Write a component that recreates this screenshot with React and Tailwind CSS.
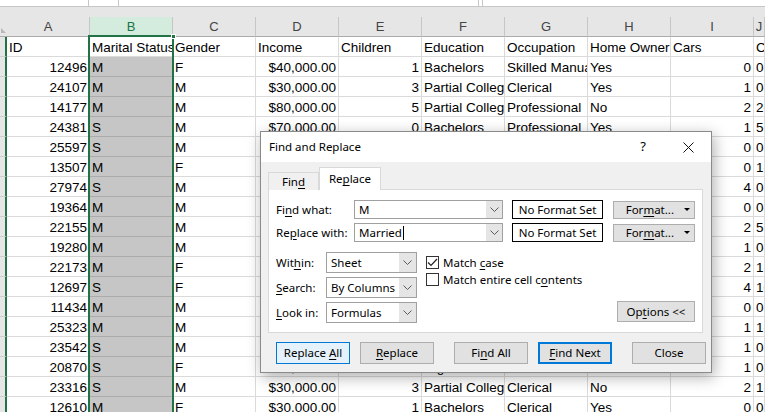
import React from 'react';

const COLS = ['A', 'B', 'C', 'D', 'E', 'F', 'G', 'H', 'I', 'J'];
const RIGHT = [true, false, false, true, true, false, false, false, true, false];

const HEAD = ['ID', 'Marital Status', 'Gender', 'Income', 'Children', 'Education', 'Occupation', 'Home Owner', 'Cars', 'Commute Distance'];

const ROWS = [
  ['12496', 'M', 'F', '$40,000.00', '1', 'Bachelors', 'Skilled Manual', 'Yes', '0', '0-1 Miles'],
  ['24107', 'M', 'M', '$30,000.00', '3', 'Partial College', 'Clerical', 'Yes', '1', '0-1 Miles'],
  ['14177', 'M', 'M', '$80,000.00', '5', 'Partial College', 'Professional', 'No', '2', '2-5 Miles'],
  ['24381', 'S', 'M', '$70,000.00', '0', 'Bachelors', 'Professional', 'Yes', '1', '5-10 Miles'],
  ['25597', 'S', 'M', '$30,000.00', '0', 'Bachelors', 'Clerical', 'No', '0', '0-1 Miles'],
  ['13507', 'M', 'F', '$10,000.00', '2', 'Partial College', 'Manual', 'Yes', '0', '1-2 Miles'],
  ['27974', 'S', 'M', '$160,000.00', '2', 'High School', 'Management', 'Yes', '4', '0-1 Miles'],
  ['19364', 'M', 'M', '$40,000.00', '1', 'Bachelors', 'Skilled Manual', 'Yes', '0', '0-1 Miles'],
  ['22155', 'M', 'M', '$20,000.00', '2', 'Partial High School', 'Clerical', 'Yes', '2', '5-10 Miles'],
  ['19280', 'M', 'M', '$120,000.00', '2', 'Partial College', 'Manual', 'Yes', '1', '0-1 Miles'],
  ['22173', 'M', 'F', '$30,000.00', '3', 'High School', 'Skilled Manual', 'No', '2', '1-2 Miles'],
  ['12697', 'S', 'F', '$90,000.00', '0', 'Bachelors', 'Professional', 'No', '4', '10+ Miles'],
  ['11434', 'M', 'M', '$170,000.00', '5', 'Partial College', 'Professional', 'Yes', '0', '0-1 Miles'],
  ['25323', 'M', 'M', '$40,000.00', '2', 'Partial College', 'Clerical', 'Yes', '1', '1-2 Miles'],
  ['23542', 'S', 'M', '$60,000.00', '1', 'Partial College', 'Skilled Manual', 'No', '1', '0-1 Miles'],
  ['20870', 'S', 'F', '$10,000.00', '2', 'High School', 'Manual', 'Yes', '1', '0-1 Miles'],
  ['23316', 'S', 'M', '$30,000.00', '3', 'Partial College', 'Clerical', 'No', '2', '1-2 Miles'],
  ['12610', 'M', 'F', '$30,000.00', '1', 'Bachelors', 'Clerical', 'Yes', '0', '0-1 Miles'],
];

// underline one access-key letter
const Key = ({ children }) => <span className="underline underline-offset-[2px]">{children}</span>;

const Chevron = () => (
  <svg width="9" height="5" viewBox="0 0 9 5" className="block">
    <path d="M0.5 0.5 L4.5 4.5 L8.5 0.5" fill="none" stroke="#5a5a5a" strokeWidth="1" />
  </svg>
);

const Cell = ({ value, col, header }) => {
  const sel = col === 1 && !header;
  return (
    <div
      className={`${col === 9 ? 'flex-1' : 'w-[83px] shrink-0'} h-[20px] border-r border-b overflow-hidden whitespace-nowrap px-[2px] pt-[3px] leading-[15px] ${
        RIGHT[col] && !header ? 'text-right' : ''
      } ${sel ? 'bg-[#c6c6c6] border-[#ababab]' : 'bg-white border-[#dadada]'}`}
    >
      {value}
    </div>
  );
};

const Row = ({ cells, header }) => (
  <div className="flex">
    <div className="w-[7px] shrink-0 h-[20px] bg-[#e6e6e6] border-b border-[#cfcfcf] border-r-2 border-r-[#217346]" />
    {cells.map((v, i) => (
      <Cell key={i} value={v} col={i} header={header} />
    ))}
  </div>
);

const Combo = ({ value, cursor }) => (
  <div className="w-[149px] h-[19px] border border-[#a0a0a0] bg-white flex items-center">
    <div className="flex-1 pl-[4px] flex items-center">
      <span>{value}</span>
      {cursor && <span className="w-px h-[14px] bg-black ml-px" />}
    </div>
    <div className="w-[16px] h-full bg-[#e5e5e5] flex items-center justify-center">
      <Chevron />
    </div>
  </div>
);

const Select = ({ value }) => (
  <div className="w-[91px] h-[21px] border border-[#a0a0a0] bg-white flex items-center">
    <div className="flex-1 pl-[4px]">{value}</div>
    <div className="w-[17px] h-full bg-[#e5e5e5] flex items-center justify-center">
      <Chevron />
    </div>
  </div>
);

const FormatBtn = () => (
  <div className="w-[82px] h-[18px] ml-[10px] bg-[#e1e1e1] border border-[#adadad] flex items-center justify-end pr-[4px]">
    <span>
      For<Key>m</Key>at...
    </span>
    <span className="ml-[10px] w-0 h-0 border-l-[3px] border-r-[3px] border-t-[3px] border-l-transparent border-r-transparent border-t-black" />
  </div>
);

const Check = ({ checked }) => (
  <div className="w-[13px] h-[13px] border border-[#333] bg-white flex items-center justify-center">
    {checked && (
      <svg width="11" height="9" viewBox="0 0 11 9">
        <path d="M1 4.5 L4 7.5 L10 1" fill="none" stroke="#222" strokeWidth="1.2" />
      </svg>
    )}
  </div>
);

const Btn = ({ children, className }) => (
  <div className={`w-[74px] h-[22px] flex items-center justify-center ${className}`}>
    <span>{children}</span>
  </div>
);

const Dialog = () => (
  <div className="absolute left-[260px] top-[131px] w-[452px] h-[242px] border border-[#8a8a8a] bg-[#f0f0f0] shadow-[2px_4px_14px_rgba(0,0,0,0.32)] flex flex-col text-[11.5px] text-black font-['Noto_Sans',sans-serif]">
    <div className="h-[30px] bg-white flex items-center pl-[8px]">
      <div className="flex-1">Find and Replace</div>
      <div className="w-[20px] text-center text-[13px] mr-[30px]">?</div>
      <svg width="11" height="11" viewBox="0 0 11 11" className="mr-[17px]">
        <path d="M0.5 0.5 L10.5 10.5 M10.5 0.5 L0.5 10.5" stroke="#111" strokeWidth="1" />
      </svg>
    </div>

    <div className="pl-[7px] pt-[6px]">
      <div className="flex items-end h-[22px] -mb-px relative">
        <div className="w-[51px] h-[18px] border border-b-0 border-[#d9d9d9] bg-[#f0f0f0] flex items-center justify-center">
          <span>
            Fin<Key>d</Key>
          </span>
        </div>
        <div className="w-[62px] h-[23px] border border-b-0 border-[#d9d9d9] bg-white flex items-center justify-center">
          <span>
            Re<Key>p</Key>lace
          </span>
        </div>
      </div>

      <div className="w-[435px] h-[144px] border border-[#d9d9d9] bg-white pl-[7px] pt-[10px] pr-[7px] flex flex-col">
        <div className="flex items-center">
          <div className="w-[78px]">
            Fi<Key>n</Key>d what:
          </div>
          <Combo value="M" />
          <div className="w-[91px] h-[19px] ml-[9px] border border-black flex items-center justify-center">No Format Set</div>
          <FormatBtn />
        </div>
        <div className="flex items-center mt-[4px]">
          <div className="w-[78px]">
            Re<Key>p</Key>lace with:
          </div>
          <Combo value="Married" cursor />
          <div className="w-[91px] h-[19px] ml-[9px] border border-black flex items-center justify-center">No Format Set</div>
          <FormatBtn />
        </div>

        <div className="flex mt-[10px]">
          <div className="flex flex-col gap-[4px]">
            <div className="flex items-center">
              <div className="w-[50px]">
                Wit<Key>h</Key>in:
              </div>
              <Select value="Sheet" />
            </div>
            <div className="flex items-center">
              <div className="w-[50px]">
                <Key>S</Key>earch:
              </div>
              <Select value="By Columns" />
            </div>
            <div className="flex items-center">
              <div className="w-[50px]">
                <Key>L</Key>ook in:
              </div>
              <Select value="Formulas" />
            </div>
          </div>
          <div className="ml-[9px] pt-[2px] flex flex-col">
            <div className="h-[17px] flex items-center gap-[4px]">
              <Check checked />
              <span>
                Match <Key>c</Key>ase
              </span>
            </div>
            <div className="h-[17px] flex items-center gap-[4px]">
              <Check />
              <span>
                Match entire cell c<Key>o</Key>ntents
              </span>
            </div>
          </div>
          <div className="flex-1 flex items-end justify-end">
            <div className="w-[78px] h-[21px] mb-px bg-[#e1e1e1] border border-[#adadad] flex items-center justify-center">
              <span>
                Op<Key>t</Key>ions &lt;&lt;
              </span>
            </div>
          </div>
        </div>
      </div>

      <div className="flex mt-[9px] pl-[8px]">
        <Btn className="bg-[#e5f1fb] border border-[#0078d7]">
          Replace <Key>A</Key>ll
        </Btn>
        <Btn className="ml-[10px] bg-[#e1e1e1] border border-[#adadad]">
          <Key>R</Key>eplace
        </Btn>
        <Btn className="ml-[20px] bg-[#e1e1e1] border border-[#adadad]">
          Fi<Key>n</Key>d All
        </Btn>
        <Btn className="ml-[10px] bg-[#e1e1e1] border-2 border-[#0078d7]">
          <Key>F</Key>ind Next
        </Btn>
        <Btn className="ml-[20px] bg-[#e1e1e1] border border-[#adadad]">Close</Btn>
      </div>
    </div>
  </div>
);

export default function App() {
  return (
    <div className="w-[765px] h-[412px] overflow-hidden relative bg-white text-[13.5px] text-black font-['Liberation_Sans',sans-serif]">
      {/* formula bar bottom edge */}
      <div className="h-[7px] flex bg-white border-b border-[#c6c6c6]">
        <div className="w-[89px] border-r border-[#c6c6c6]" />
        <div className="w-[29px]" />
        <div className="w-[361px] border-l border-r border-[#c6c6c6]" />
        <div className="w-[3px]" />
        <div className="flex-1 border-l border-[#c6c6c6]" />
      </div>
      <div className="h-[10px] bg-[#e6e6e6]" />

      {/* column letters */}
      <div className="flex h-[20px] bg-[#e6e6e6] text-[13px] text-[#444]">
        <div className="w-[7px] shrink-0 border-b border-[#ababab] flex items-end">
          <div className="w-0 h-0 ml-[1px] mb-[3px] border-l-[5px] border-t-[5px] border-l-transparent border-t-[#b8b8b8] rotate-180" />
        </div>
        {COLS.map((c, i) => (
          <div
            key={c}
            className={`${i === 9 ? 'flex-1' : 'w-[83px] shrink-0'} border-r border-b border-r-[#c6c6c6] border-b-[#ababab] flex items-center justify-center ${
              i === 1 ? 'bg-[#d3ecdd] text-[#217346]' : ''
            }`}
          >
            {c}
          </div>
        ))}
      </div>

      <Row cells={HEAD} header />
      {ROWS.map((r, i) => (
        <Row key={i} cells={r} />
      ))}

      {/* selected column outline */}
      <div className="absolute left-[88px] top-[35px] w-[86px] h-[400px] border-2 border-b-0 border-[#217346]" />
      <div className="absolute left-[171px] top-[34px] w-[5px] h-[5px] bg-[#217346] border border-white" />

      <Dialog />
    </div>
  );
}
